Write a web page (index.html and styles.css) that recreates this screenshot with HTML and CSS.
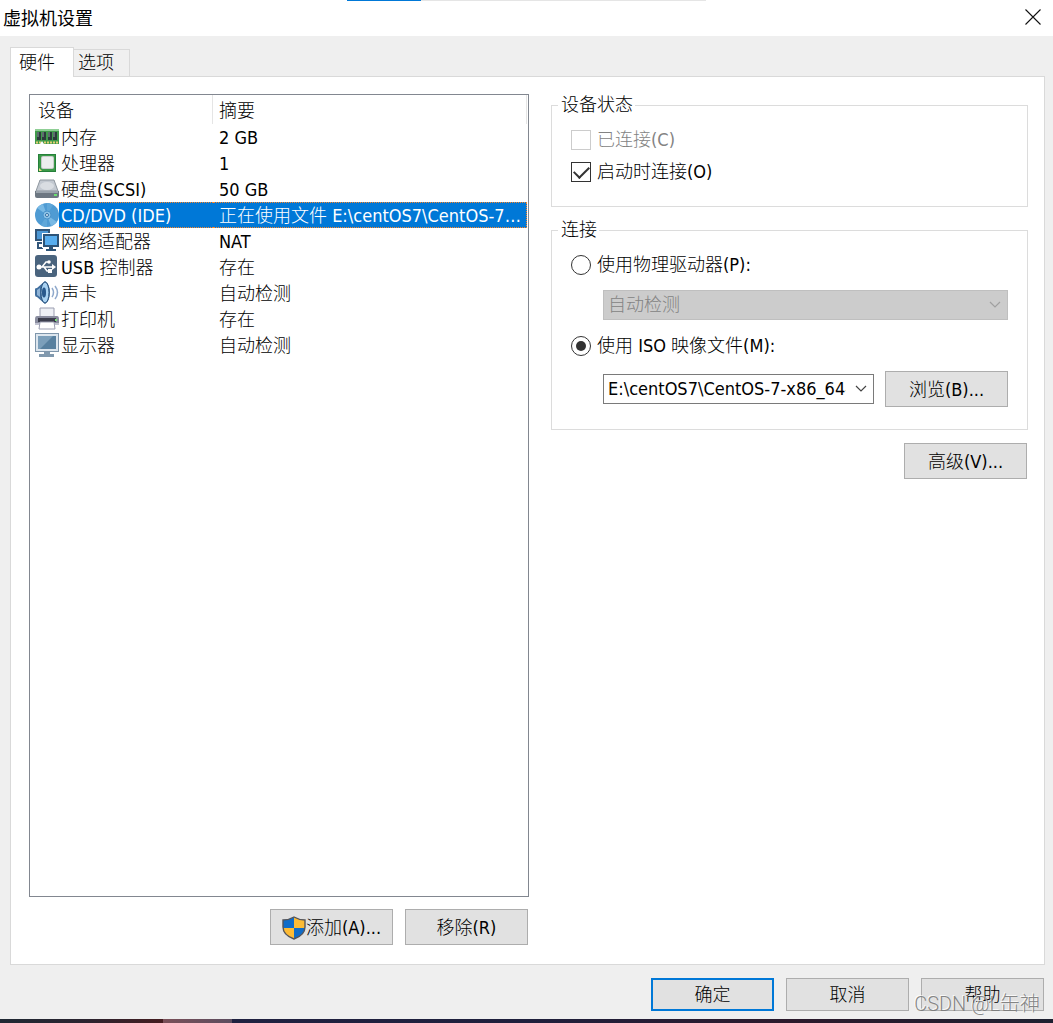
FILE: index.html
```html
<!DOCTYPE html>
<html lang="zh-CN">
<head>
    <meta charset="UTF-8">
    <meta name="viewport" content="width=device-width, initial-scale=1.0">
    <title>虚拟机设置</title>
    <link rel="stylesheet" href="styles.css">
</head>
<body>
    <div class="progress"></div>

    <header class="titlebar">
        <h1>虚拟机设置</h1>
        <button type="button" class="close-btn" aria-label="关闭">
            <svg width="16" height="16" viewBox="0 0 16 16"><path d="M0.5 0.5L15.5 15.5M15.5 0.5L0.5 15.5" stroke="#111" stroke-width="1.1" fill="none"/></svg>
        </button>
    </header>

    <main class="dialog">
        <div class="tabs" role="tablist">
            <button type="button" class="tab active" role="tab" aria-selected="true">硬件</button>
            <button type="button" class="tab" role="tab" aria-selected="false">选项</button>
        </div>

        <div class="panel">
            <section class="devices">
                <div class="device-list">
                    <table>
                        <colgroup>
                            <col class="col-icon">
                            <col class="col-name">
                            <col>
                        </colgroup>
                        <thead>
                            <tr>
                                <th colspan="2">设备</th>
                                <th>摘要</th>
                            </tr>
                        </thead>
                        <tbody>
                            <tr>
                                <td class="icon">
                                    <svg width="24" height="24" viewBox="0 0 24 24">
                                        <rect x="0" y="4" width="24" height="15" fill="#3f9a4a"/>
                                        <rect x="0" y="4" width="24" height="2" fill="#8fcf95"/>
                                        <path d="M2 7h4v8H2zM7 7h4v8H7zM13 7h4v8h-4zM18 7h4v8h-4z" fill="#2c3a3c"/>
                                        <path d="M2 7h2v5H2zM7 7h2v5H7zM13 7h2v5h-2zM18 7h2v5h-2z" fill="#5d6c6e"/>
                                        <path d="M1 17.500h5M9 17.500h14" stroke="#e3cf72" stroke-width="2" stroke-dasharray="2 1"/>
                                        <path d="M5 19l2-3 2 3z" fill="#fff"/>
                                    </svg>
                                </td>
                                <td>内存</td>
                                <td>2 GB</td>
                            </tr>
                            <tr>
                                <td class="icon">
                                    <svg width="24" height="24" viewBox="0 0 24 24">
                                        <rect x="3.500" y="3.500" width="17" height="17" fill="#3b9a48" stroke="#26803a"/>
                                        <path d="M4 17l3 3H4z" fill="#f1dc8a"/>
                                        <rect x="6" y="5" width="13" height="13" rx="2" fill="#c9cccb"/>
                                        <rect x="7" y="6" width="11" height="11" rx="1" fill="#eceeed"/>
                                    </svg>
                                </td>
                                <td>处理器</td>
                                <td>1</td>
                            </tr>
                            <tr>
                                <td class="icon">
                                    <svg width="24" height="24" viewBox="0 0 24 24">
                                        <path d="M5 3h14l4 11H1z" fill="#c3c9d1" stroke="#8f979f"/>
                                        <ellipse cx="12" cy="9" rx="7" ry="4" fill="#d9dde2"/>
                                        <path d="M0 14h24v5q0 2-2 2H2q-2 0-2-2z" fill="#6d7782"/>
                                        <path d="M1 14h22v2H1z" fill="#9ba4ad"/>
                                        <rect x="19" y="17" width="3" height="2" fill="#6be06f"/>
                                    </svg>
                                </td>
                                <td>硬盘(SCSI)</td>
                                <td>50 GB</td>
                            </tr>
                            <tr class="selected">
                                <td class="icon">
                                    <svg width="24" height="24" viewBox="0 0 24 24">
                                        <circle cx="12" cy="12" r="12" fill="#4f9bd3"/>
                                        <path d="M12 12L2 5A12 12 0 0 1 8 1zM12 12l10 7a12 12 0 0 1-6 4z" fill="#79b9e4"/>
                                        <path d="M12 12L12 0A12 12 0 0 1 18 2zM12 12v12a12 12 0 0 1-6-2z" fill="#5fa7d9"/>
                                        <circle cx="12" cy="12" r="4" fill="#8cc3e8" stroke="#4a93ca"/>
                                        <circle cx="12" cy="12" r="1.500" fill="#e6f3fb" stroke="#2f6ea5"/>
                                    </svg>
                                </td>
                                <td>CD/DVD (IDE)</td>
                                <td>正在使用文件 E:\centOS7\CentOS-7-x86_64-DVD.iso</td>
                            </tr>
                            <tr>
                                <td class="icon">
                                    <svg width="24" height="24" viewBox="0 0 24 24">
                                        <rect x="1" y="1" width="13" height="10" fill="#4c97d4" stroke="#31567a" stroke-width="2"/>
                                        <path d="M3 13v6h5M2 14h6" stroke="#31567a" stroke-width="2" fill="none"/>
                                        <rect x="9" y="6" width="14" height="11" fill="#62b5f2" stroke="#fff" stroke-width="4"/>
                                        <rect x="9" y="6" width="14" height="11" fill="#58aeef" stroke="#2d5478" stroke-width="2"/>
                                        <path d="M14 18h4v2h3v2H11v-2h3z" fill="#2d5478"/>
                                    </svg>
                                </td>
                                <td>网络适配器</td>
                                <td>NAT</td>
                            </tr>
                            <tr>
                                <td class="icon">
                                    <svg width="24" height="24" viewBox="0 0 24 24">
                                        <rect x="0" y="0" width="22" height="22" rx="3" fill="#4a647e"/>
                                        <path d="M4 12h14M7 12l4-5h3M9 12l3 4h3" stroke="#fff" stroke-width="1.500" fill="none"/>
                                        <circle cx="4" cy="12" r="2.500" fill="#fff"/>
                                        <circle cx="14" cy="7" r="1.800" fill="#fff"/>
                                        <rect x="13" y="14" width="4" height="4" fill="#fff"/>
                                        <path d="M17 9l4 3-4 3z" fill="#fff"/>
                                    </svg>
                                </td>
                                <td>USB 控制器</td>
                                <td>存在</td>
                            </tr>
                            <tr>
                                <td class="icon">
                                    <svg width="24" height="24" viewBox="0 0 24 24">
                                        <path d="M0 8q0-1 2-1l8-7q5 3 5 11.500T10 23l-8-7q-2 0-2-2z" fill="#416f9e"/>
                                        <ellipse cx="10" cy="11.500" rx="4" ry="10.500" fill="#a9d2f2" stroke="#2a527d"/>
                                        <ellipse cx="9" cy="11.500" rx="2" ry="5" fill="#28588c"/>
                                        <path d="M2 9l3-2v9l-3-2z" fill="#8fb3d6"/>
                                        <path d="M17 7q3 4.500 0 9M20 5q5 6.500 0 13" stroke="#8fa9cc" stroke-width="1.500" fill="none"/>
                                    </svg>
                                </td>
                                <td>声卡</td>
                                <td>自动检测</td>
                            </tr>
                            <tr>
                                <td class="icon">
                                    <svg width="24" height="24" viewBox="0 0 24 24">
                                        <path d="M5 1h14v9H5z" fill="#eef0f5" stroke="#9a9db0"/>
                                        <path d="M2 9h20q2 0 2 3v6H0v-6q0-3 2-3z" fill="#8a8d9f"/>
                                        <path d="M3 11h18v4H3z" fill="#3c3e4d"/>
                                        <path d="M0 16h24v2H0z" fill="#bfc1cf"/>
                                        <path d="M5 15h14l1 7H4z" fill="#fff" stroke="#9a9db0"/>
                                        <rect x="20" y="12" width="2" height="2" fill="#7ee07e"/>
                                    </svg>
                                </td>
                                <td>打印机</td>
                                <td>存在</td>
                            </tr>
                            <tr>
                                <td class="icon">
                                    <svg width="24" height="24" viewBox="0 0 24 24">
                                        <rect x="0.500" y="0.500" width="23" height="18" fill="#dde6ee" stroke="#7f96ab"/>
                                        <rect x="3" y="3" width="18" height="13" fill="#58809f"/>
                                        <path d="M3 3h15L5 16H3z" fill="#7c9fba"/>
                                        <path d="M9 19h6v2h4v3H4v-3h5z" fill="#8199ae"/>
                                    </svg>
                                </td>
                                <td>显示器</td>
                                <td>自动检测</td>
                            </tr>
                        </tbody>
                    </table>
                </div>
                <div class="button-row">
                    <button type="button" class="btn">
                        <svg width="24" height="24" viewBox="0 0 24 24">
                            <path d="M12 1Q7 4 1 4v7q0 8 11 12 11-4 11-12V4q-6 0-11-3z" fill="#0f6cc9"/>
                            <path d="M12 1q5 3 11 3v8H12zM12 12v11Q1 19 1 12z" fill="#fdbb35"/>
                            <path d="M12 1Q7 4 1 4v7q0 8 11 12 11-4 11-12V4q-6 0-11-3z" fill="none" stroke="#55555a" stroke-width="1.400"/>
                        </svg>
                        添加(A)...
                    </button>
                    <button type="button" class="btn">移除(R)</button>
                </div>
            </section>

            <section class="settings">
                <fieldset>
                    <legend>设备状态</legend>
                    <label class="option disabled"><input type="checkbox" disabled>已连接(C)</label>
                    <label class="option"><input type="checkbox" checked>启动时连接(O)</label>
                </fieldset>

                <fieldset>
                    <legend>连接</legend>
                    <label class="option"><input type="radio" name="source" value="physical">使用物理驱动器(P):</label>
                    <div class="source-row">
                        <div class="combo disabled">
                            <select aria-label="物理驱动器" disabled>
                                <option>自动检测</option>
                            </select>
                            <svg width="12" height="8" viewBox="0 0 12 8"><path d="M1 1l5 5 5-5" fill="none" stroke="currentColor" stroke-width="1.200"/></svg>
                        </div>
                    </div>
                    <label class="option"><input type="radio" name="source" value="iso" checked>使用 ISO 映像文件(M):</label>
                    <div class="source-row">
                        <div class="combo">
                            <select aria-label="ISO 映像文件">
                                <option>E:\centOS7\CentOS-7-x86_64-DVD.iso</option>
                            </select>
                            <svg width="12" height="8" viewBox="0 0 12 8"><path d="M1 1l5 5 5-5" fill="none" stroke="currentColor" stroke-width="1.200"/></svg>
                        </div>
                        <button type="button" class="btn">浏览(B)...</button>
                    </div>
                </fieldset>

                <button type="button" class="btn advanced">高级(V)...</button>
            </section>
        </div>
    </main>

    <footer class="actions">
        <button type="submit" class="btn default">确定</button>
        <button type="button" class="btn">取消</button>
        <button type="button" class="btn">帮助</button>
        <span class="watermark">CSDN @L缶神</span>
    </footer>

    <div class="desktop-strip"></div>
</body>
</html>
```
FILE: styles.css
```css
* {
    box-sizing: border-box;
}

body {
    margin: 0;
    min-height: 100vh;
    display: flex;
    flex-direction: column;
    background: #efefef;
    color: #000;
    font-family: "DejaVu Sans Condensed", "Noto Sans CJK SC", sans-serif;
    font-size: 18px;
    font-weight: 300;
    line-height: 24px;
}

button, input, select {
    font: inherit;
    color: inherit;
    margin: 0;
}

/* loading bar at the very top of the window */
.progress {
    height: 1px;
    background: linear-gradient(to right, #fff 33%, #0078d7 33%, #0078d7 40%, #e5e5e5 40%, #e5e5e5 67%, #fff 67%);
}

.titlebar {
    display: flex;
    align-items: center;
    justify-content: space-between;
    height: 35px;
    padding: 0 12px 4px 3px;
    background: #fff;
}

.titlebar h1 {
    margin: 0;
    font-family: "Noto Sans CJK SC", sans-serif;
    font-size: 18px;
    font-weight: 400;
}

.close-btn {
    display: flex;
    padding: 0;
    border: none;
    background: none;
}

.dialog {
    flex: 1;
    display: flex;
    flex-direction: column;
    padding: 11px 8px 0 10px;
}

/* tabs */
.tabs {
    display: flex;
    align-items: flex-end;
}

.tab {
    height: 27px;
    padding: 0 15px 0 4px;
    border: 1px solid #d9d9d9;
    border-width: 1px 1px 0 0;
    background: #f0f0f0;
}

.tab.active {
    height: 30px;
    margin-bottom: -1px;
    padding: 0 18px 0 8px;
    border-left-width: 1px;
    background: #fff;
    z-index: 1;
}

.panel {
    flex: 1;
    display: grid;
    grid-template-columns: 500fr 477fr;
    gap: 22px;
    padding: 17px 16px 19px 18px;
    border: 1px solid #d9d9d9;
    background: #fff;
}

.devices {
    display: flex;
    flex-direction: column;
    gap: 12px;
    min-width: 0;
}

.device-list {
    flex: 1;
    padding-right: 1px;
    border: 1px solid #828790;
}

table {
    width: 100%;
    table-layout: fixed;
    border-collapse: separate;
    border-spacing: 0;
}

.col-icon {
    width: 29px;
}

.col-name {
    width: 154px;
}

th {
    height: 29px;
    padding: 3px 6px 0 8px;
    border-right: 1px solid #e5e5e5;
    font-weight: inherit;
    text-align: left;
}

th + th {
    padding-left: 6px;
}

td {
    height: 26px;
    padding: 2px 4px 0 2px;
    border: 1px solid transparent;
    border-width: 1px 0;
    line-height: 22px;
    overflow: hidden;
    text-overflow: ellipsis;
    white-space: nowrap;
}

td + td + td {
    padding-left: 6px;
}

td.icon {
    padding: 0 0 0 5px;
}

td.icon svg {
    display: block;
}

.selected td:not(.icon) {
    border-color: #ff8728;
    border-style: dotted;
    background: #0078d7;
    color: #fff;
}

.selected td:last-child {
    border-right-width: 1px;
}

.button-row {
    display: flex;
    justify-content: flex-end;
    gap: 12px;
    padding-right: 1px;
}

.btn {
    display: flex;
    align-items: center;
    justify-content: center;
    width: 123px;
    height: 36px;
    padding: 1px 0 0;
    border: 1px solid #adadad;
    background: #e1e1e1;
    white-space: nowrap;
}

/* right side */
.settings {
    display: flex;
    flex-direction: column;
    gap: 12px;
    min-width: 0;
}

fieldset {
    min-width: 0;
    margin: 0;
    padding: 8px 19px 18px;
    border: 1px solid #dcdcdc;
}

legend {
    margin-left: -13px;
    padding: 0 2px 0 3px;
    line-height: 22px;
}

.option {
    display: flex;
    align-items: center;
    gap: 6px;
    height: 32px;
}

.option.disabled {
    color: #838383;
}

.option input {
    appearance: none;
    display: grid;
    place-items: center;
    width: 20px;
    height: 20px;
    border: 1px solid #333;
    background: #fff;
}

.option input:disabled {
    border-color: #ccc;
}

.option input[type="checkbox"]:checked::before {
    content: "";
    width: 13px;
    height: 7px;
    margin-top: -4px;
    border: solid #333;
    border-width: 0 0 2px 2px;
    transform: rotate(-45deg);
}

.option input[type="radio"] {
    border-radius: 50%;
}

.option input[type="radio"]:checked::before {
    content: "";
    width: 10px;
    height: 10px;
    border-radius: 50%;
    background: #333;
}

.source-row {
    display: flex;
    align-items: center;
    gap: 11px;
    margin: 9px 0 10px 32px;
}

.source-row:last-child {
    margin-bottom: 4px;
}

.combo {
    position: relative;
    flex: 1;
    min-width: 0;
}

.combo select {
    appearance: none;
    display: block;
    width: 100%;
    height: 30px;
    padding: 0 27px 0 4px;
    border: 1px solid #7a7a7a;
    border-radius: 0;
    background: #fff;
}

.combo svg {
    position: absolute;
    top: 11px;
    right: 7px;
    color: #444;
    pointer-events: none;
}

.combo.disabled select {
    border-color: #bfbfbf;
    background: #ccc;
    color: #838383;
    opacity: 1;
}

.combo.disabled svg {
    color: #a0a0a0;
}

.advanced {
    align-self: flex-end;
    margin: 1px 1px 0 0;
}

/* bottom buttons */
.actions {
    position: relative;
    display: flex;
    justify-content: flex-end;
    gap: 12px;
    padding: 13px 9px 8px;
}

.actions .btn {
    height: 33px;
}

.btn.default {
    border: 2px solid #0078d7;
}

.watermark {
    position: absolute;
    right: 13px;
    bottom: 3px;
    font-family: Roboto, "Noto Sans CJK SC", sans-serif;
    font-size: 20px;
    color: rgba(120, 120, 120, 0.9);
    text-shadow: -1px -1px 0 rgba(255, 255, 255, 0.8);
    pointer-events: none;
}

.desktop-strip {
    height: 4px;
    background: linear-gradient(to right, #1f2833, #2a2430 8%, #451c20 15.5%, #7a4f58 15.5%, #5c4d5f 22%, #1f2140 22%, #1e1f3c 50%, #2b1a2c 75%, #1d2030);
}
```
